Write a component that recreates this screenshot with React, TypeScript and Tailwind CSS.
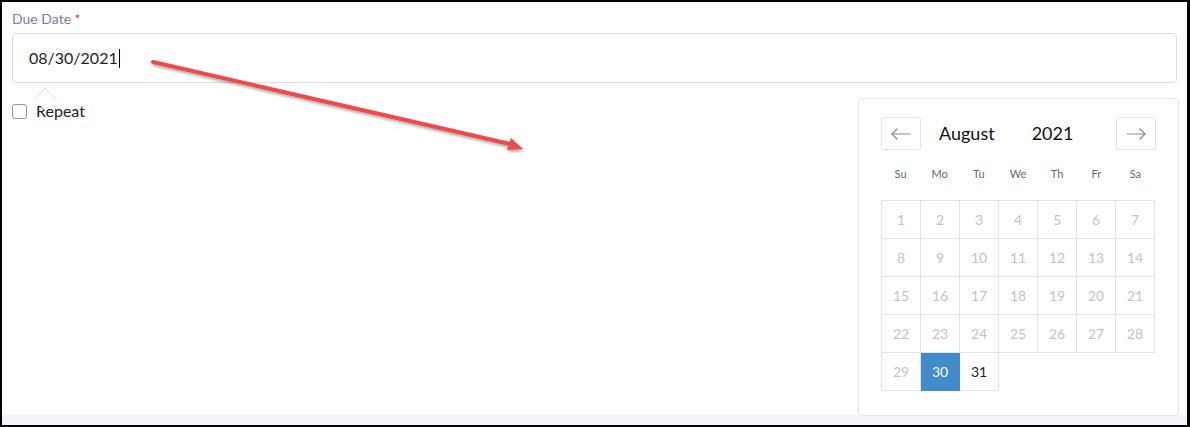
const weekdays = ['Su', 'Mo', 'Tu', 'We', 'Th', 'Fr', 'Sa']
const days = Array.from({ length: 31 }, (_, i) => i + 1)
const selected = 30

function NavArrow({ dir }: { dir: 'left' | 'right' }) {
  return (
    <svg width="22" height="12" viewBox="0 0 22 12" fill="none" stroke="#8a8a8a" strokeWidth="1.2" strokeLinecap="round" strokeLinejoin="round">
      {dir === 'left' ? (
        <>
          <line x1="2" y1="6" x2="20" y2="6" />
          <polyline points="7,1 2,6 7,11" />
        </>
      ) : (
        <>
          <line x1="2" y1="6" x2="20" y2="6" />
          <polyline points="15,1 20,6 15,11" />
        </>
      )}
    </svg>
  )
}

function Calendar() {
  return (
    <div className="absolute left-[856px] top-[96px] w-[321px] h-[318px] bg-white border border-[#e6e6ea] rounded-[4px] pt-[18px] px-[22px]">
      {/* Month / year header */}
      <div className="flex items-center h-[33px] w-[275px]">
        <button className="w-[40px] h-[33px] border border-[#e3e3e6] rounded-[3px] flex items-center justify-center">
          <NavArrow dir="left" />
        </button>
        <div className="flex-1 flex items-center text-[18px] text-[#111] pl-[18px]">
          <span>August</span>
          <span className="ml-[37px]">2021</span>
        </div>
        <button className="w-[40px] h-[33px] border border-[#e3e3e6] rounded-[3px] flex items-center justify-center">
          <NavArrow dir="right" />
        </button>
      </div>

      {/* Weekday names */}
      <div className="grid grid-cols-7 w-[274px] mt-[15px] text-[11px] text-[#5b6b7b]">
        {weekdays.map((d) => (
          <div key={d} className="text-center h-[18px] leading-[18px]">
            {d}
          </div>
        ))}
      </div>

      {/* Day grid */}
      <div className="grid grid-cols-[repeat(7,39px)] auto-rows-[38px] mt-[17px] w-fit border-l border-t border-[#e3e3e3]">
        {days.map((d) => (
          <div
            key={d}
            className={
              d === selected
                ? 'flex items-center justify-center border-r border-b border-[#428bca] bg-[#428bca] text-white text-[14px]'
                : d === 31
                  ? 'flex items-center justify-center border-r border-b border-[#e3e3e3] text-[#222] text-[14px]'
                  : 'flex items-center justify-center border-r border-b border-[#e3e3e3] text-[#c4c4c4] text-[14px]'
            }
          >
            {d}
          </div>
        ))}
      </div>
    </div>
  )
}

export default function App() {
  return (
    <div
      className="w-[1190px] h-[427px] border-t-2 border-l-2 border-r-[3px] border-b-2 border-black flex flex-col bg-white"
      style={{ fontFamily: 'Lato, "Noto Sans", sans-serif' }}
    >
      <div className="relative flex-1 px-[10px] pt-[9px]">
        <label className="block text-[14px] text-[#7c7c9c] leading-[16px]">
          Due Date <span className="text-[#e0405a]">*</span>
        </label>

        <div className="mt-[6px] h-[50px] border border-[#dcdde3] rounded-[4px] flex items-center pl-[16px] text-[16px] text-[#1e1e1e]">
          <span>08/30/2021</span>
          <span className="w-px h-[19px] bg-black ml-[1px]" />
        </div>

        {/* Popup pointer under the field */}
        <div className="absolute left-[35px] top-[81px] w-[16px] h-[16px] rotate-45 translate-y-[8px] border-l border-t border-[#e4e4e8] bg-white" />

        <div className="mt-[16px] flex items-center gap-[9px]">
          <span className="w-[15px] h-[15px] border border-[#8a97a6] rounded-[3px] bg-white" />
          <span className="text-[16px] text-[#222]">Repeat</span>
        </div>

        {/* Annotation arrow */}
        <svg
          className="absolute left-0 top-0 pointer-events-none"
          width="600"
          height="200"
          viewBox="0 0 600 200"
        >
          <defs>
            <filter id="shadow" x="-10%" y="-50%" width="120%" height="200%">
              <feDropShadow dx="1" dy="2" stdDeviation="1.5" floodColor="#000" floodOpacity="0.35" />
            </filter>
          </defs>
          <g filter="url(#shadow)">
            <line x1="151" y1="60" x2="508" y2="142" stroke="#f04a4a" strokeWidth="4" strokeLinecap="round" />
            <polygon points="521,147 505,148 509,136" fill="#f04a4a" />
          </g>
        </svg>

        <Calendar />
      </div>
      <div className="h-[10px] bg-[#f4f4f8]" />
    </div>
  )
}
